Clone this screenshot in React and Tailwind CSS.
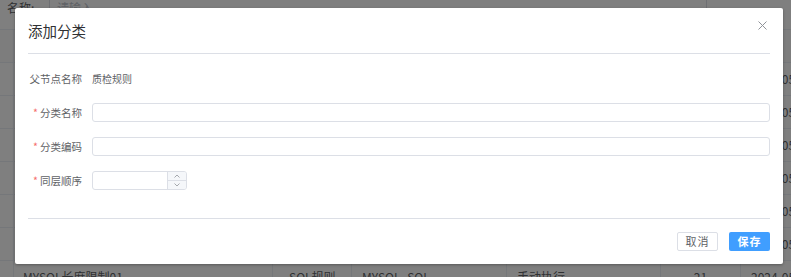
import React from 'react';

const rows = [
  { name: 'MYSQL空值检查01', type: 'SQL规则', db: 'MYSQL_SQL', mode: '手动执行', n: '18', date: '2024-05-12' },
  { name: 'MYSQL唯一性检查', type: 'SQL规则', db: 'MYSQL_SQL', mode: '手动执行', n: '19', date: '2024-05-12' },
  { name: 'MYSQL格式检查02', type: 'SQL规则', db: 'MYSQL_SQL', mode: '手动执行', n: '20', date: '2024-05-13' },
  { name: 'MYSQL范围检查', type: 'SQL规则', db: 'MYSQL_SQL', mode: '手动执行', n: '20', date: '2024-05-13' },
  { name: 'MYSQL一致性检查', type: 'SQL规则', db: 'MYSQL_SQL', mode: '手动执行', n: '21', date: '2024-05-14' },
  { name: 'MYSQL及时性检查', type: 'SQL规则', db: 'MYSQL_SQL', mode: '手动执行', n: '21', date: '2024-05-14' },
  { name: 'MYSQL长度限制01', type: 'SQL规则', db: 'MYSQL_SQL', mode: '手动执行', n: '21', date: '2024-05-15' },
];

const cell = 'shrink-0 overflow-hidden whitespace-nowrap border-r border-[#ebeef5] leading-[32px]';

const Label = ({ required, children }) => (
  <div className="w-[54px] shrink-0 whitespace-nowrap text-right text-[10.5px] leading-[19px] text-[#606266]">
    {required && <span className="mr-[2px] text-[#f56c6c]">*</span>}
    {children}
  </div>
);

const App = () => {
  return (
    <div className="relative h-[277px] w-[791px] overflow-hidden bg-white font-['Noto_Sans_CJK_SC',sans-serif] text-[12px] text-[#606266]">
      {/* page behind the dialog */}
      <div className="flex h-[29px] items-start">
        <span className="ml-[7px] w-[42px] leading-[16px]">名称:</span>
        <div className="h-[29px] w-[658px] border-x border-[#dcdfe6] px-[7px] leading-[16px] text-[#c0c4cc]">请输入</div>
      </div>
      <div className="border-t border-[#ebeef5]">
        <div className="flex h-[33px] border-b border-[#ebeef5] bg-[#fafafa] font-bold">
          <div className={`${cell} w-[14px]`} />
          <div className={`${cell} w-[259px] px-[9px]`}>规则名称</div>
          <div className={`${cell} w-[79px] px-[16px]`}>规则类型</div>
          <div className={`${cell} w-[155px] px-[10px]`}>数据源</div>
          <div className={`${cell} w-[154px] px-[10px]`}>执行方式</div>
          <div className={`${cell} w-[80px] text-center`}>次数</div>
          <div className="flex-1 overflow-hidden whitespace-nowrap px-[10px] leading-[32px]">日期</div>
        </div>
        {rows.map((r, i) => (
          <div key={i} className="flex h-[33px] border-b border-[#ebeef5]">
            <div className={`${cell} w-[14px]`} />
            <div className={`${cell} w-[259px] px-[9px]`}>{r.name}</div>
            <div className={`${cell} w-[79px] px-[16px]`}>{r.type}</div>
            <div className={`${cell} w-[155px] px-[10px]`}>{r.db}</div>
            <div className={`${cell} w-[154px] px-[10px]`}>{r.mode}</div>
            <div className={`${cell} w-[80px] text-center`}>{r.n}</div>
            <div className="flex-1 overflow-hidden whitespace-nowrap px-[10px] leading-[32px]">{r.date}</div>
          </div>
        ))}
      </div>

      {/* overlay */}
      <div className="absolute inset-0 bg-black/50" />

      {/* dialog */}
      <div className="absolute left-[15px] top-[8px] w-[768px] rounded-[2px] bg-white shadow-[0_1px_3px_rgba(0,0,0,0.3)]">
        <div className="relative mx-[13px] flex h-[46px] items-center border-b border-[#dcdfe6]">
          <span className="text-[14.5px] text-[#303133]">添加分类</span>
          <svg className="absolute right-[3px] top-[13px]" width="9" height="9" viewBox="0 0 9 9">
            <path d="M0.5 0.5L8.5 8.5M8.5 0.5L0.5 8.5" stroke="#909399" strokeWidth="1" fill="none" />
          </svg>
        </div>

        <div className="flex flex-col gap-[15px] px-[13px] pb-[28px] pt-[15px]">
          <div className="flex h-[19px] items-center gap-[10px]">
            <Label>父节点名称</Label>
            <span className="text-[10px] text-[#606266]">质检规则</span>
          </div>
          <div className="flex h-[19px] items-center gap-[10px]">
            <Label required>分类名称</Label>
            <input className="h-[19px] flex-1 rounded-[3px] border border-[#dcdfe6] px-[6px] text-[11px] outline-none" />
          </div>
          <div className="flex h-[19px] items-center gap-[10px]">
            <Label required>分类编码</Label>
            <input className="h-[19px] flex-1 rounded-[3px] border border-[#dcdfe6] px-[6px] text-[11px] outline-none" />
          </div>
          <div className="flex h-[19px] items-center gap-[10px]">
            <Label required>同层顺序</Label>
            <div className="flex h-[19px] w-[95px] overflow-hidden rounded-[3px] border border-[#dcdfe6]">
              <input className="min-w-0 flex-1 px-[6px] text-[11px] outline-none" />
              <div className="flex w-[19px] flex-col border-l border-[#dcdfe6] bg-[#f5f7fa]">
                <div className="flex flex-1 items-center justify-center border-b border-[#dcdfe6]">
                  <svg width="6" height="4" viewBox="0 0 6 4">
                    <path d="M0.5 3.5L3 1L5.5 3.5" stroke="#909399" strokeWidth="0.8" fill="none" />
                  </svg>
                </div>
                <div className="flex flex-1 items-center justify-center">
                  <svg width="6" height="4" viewBox="0 0 6 4">
                    <path d="M0.5 0.5L3 3L5.5 0.5" stroke="#909399" strokeWidth="0.8" fill="none" />
                  </svg>
                </div>
              </div>
            </div>
          </div>
        </div>

        <div className="mx-[13px] flex justify-end gap-[11px] border-t border-[#dcdfe6] pb-[13px] pt-[13px]">
          <button className="h-[19px] w-[41px] rounded-[2px] border border-[#dcdfe6] bg-white text-[11px] leading-none tracking-[1px] text-[#606266]">取消</button>
          <button className="h-[19px] w-[41px] rounded-[2px] bg-[#409eff] text-[11px] font-bold leading-none tracking-[1px] text-white">保存</button>
        </div>
      </div>
    </div>
  );
};

export default App;
